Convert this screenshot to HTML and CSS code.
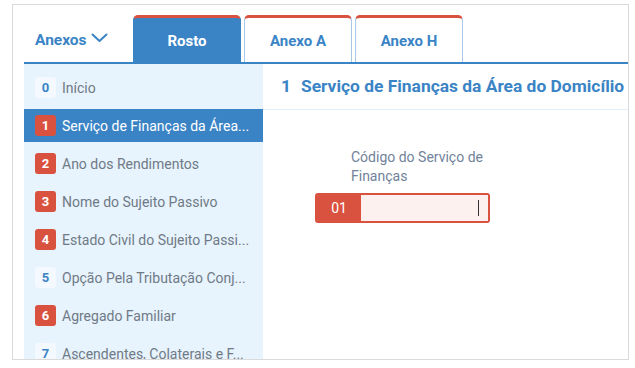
FILE: index.html
```html
<!DOCTYPE html>
<html lang="pt">
<head>
<meta charset="utf-8">
<title>Rosto</title>
<link rel="stylesheet" href="styles.css">
</head>
<body>
<div class="frame">
  <div class="tabbar">
    <div class="anexos">Anexos
      <svg class="chev" width="17" height="10" viewBox="0 0 17 10"><path d="M1.5 1.5 L8.5 8 L15.5 1.5" fill="none" stroke="#3a84c6" stroke-width="2" stroke-linecap="round" stroke-linejoin="round"/></svg>
    </div>
    <div class="tab active">Rosto</div>
    <div class="tab">Anexo A</div>
    <div class="tab">Anexo H</div>
  </div>
  <div class="main">
    <ul class="sidebar">
      <li class="item"><span class="badge plain">0</span><span class="label">Início</span></li>
      <li class="item selected"><span class="badge red">1</span><span class="label">Serviço de Finanças da Área...</span></li>
      <li class="item"><span class="badge red">2</span><span class="label">Ano dos Rendimentos</span></li>
      <li class="item"><span class="badge red">3</span><span class="label">Nome do Sujeito Passivo</span></li>
      <li class="item"><span class="badge red">4</span><span class="label">Estado Civil do Sujeito Passi...</span></li>
      <li class="item"><span class="badge plain">5</span><span class="label">Opção Pela Tributação Conj...</span></li>
      <li class="item"><span class="badge red">6</span><span class="label">Agregado Familiar</span></li>
      <li class="item"><span class="badge plain">7</span><span class="label">Ascendentes, Colaterais e F...</span></li>
    </ul>
    <div class="content">
      <div class="section-head"><span class="num">1</span><span>Serviço de Finanças da Área do Domicílio</span></div>
      <div class="field">
        <div class="field-label">Código do Serviço de<br>Finanças</div>
        <div class="input">
          <span class="prefix">01</span>
          <span class="box"><span class="caret"></span></span>
        </div>
      </div>
    </div>
  </div>
</div>
</body>
</html>
```
FILE: styles.css
```css
* { box-sizing: border-box; }
body {
  margin: 0;
  background: #fff;
  font-family: Roboto, "Liberation Sans", Arial, sans-serif;
}
.frame {
  margin: 4px 0 0 12px;
  width: 617px;
  height: 356px;
  border: 1px solid #dadada;
  overflow: hidden;
  padding-left: 11px;
}
.tabbar {
  display: flex;
  align-items: flex-end;
  height: 59px;
  padding-top: 10px;
  border-bottom: 2px solid #3a84c6;
}
.anexos {
  width: 109px;
  align-self: center;
  padding-left: 11px;
  padding-top: 2px;
  color: #3a84c6;
  font-weight: 700;
  font-size: 15.5px;
  display: flex;
  align-items: center;
  gap: 4px;
}
.chev { margin-top: -3px; }
.tab {
  width: 108px;
  height: 47px;
  margin-right: 3px;
  border: 1px solid #a9c9e8;
  border-bottom: none;
  border-top: 3px solid #d9523f;
  border-radius: 5px 5px 0 0;
  display: flex;
  align-items: center;
  justify-content: center;
  padding-top: 2px;
  color: #3a84c6;
  font-weight: 700;
  font-size: 15px;
  background: #fff;
}
.tab.active {
  background: #3a84c6;
  border-color: #3a84c6;
  border-top-color: #d9523f;
  color: #fff;
}
.main {
  display: flex;
  height: 300px;
}
.sidebar {
  list-style: none;
  margin: 0;
  padding: 7px 0 0;
  width: 239px;
  background: #e7f3fd;
}
.item {
  height: 33px;
  margin-bottom: 5px;
  display: flex;
  align-items: center;
  padding-left: 11px;
  gap: 6px;
  color: #6f7a86;
  font-size: 14px;
  white-space: nowrap;
}
.item.selected {
  background: #3a84c6;
  color: #fff;
}
.badge {
  width: 21px;
  height: 21px;
  border-radius: 3px;
  display: flex;
  align-items: center;
  justify-content: center;
  font-size: 13px;
  font-weight: 700;
  flex: none;
}
.badge.red { background: #d9523f; color: #fff; }
.badge.plain { background: #f3f9fe; color: #3a84c6; }
.content {
  flex: 1;
  background: #fff;
}
.section-head {
  height: 46px;
  border-bottom: 1px solid #e2eef8;
  display: flex;
  align-items: center;
  padding-left: 18px;
  padding-bottom: 2px;
  gap: 10px;
  color: #3a84c6;
  font-weight: 700;
  font-size: 17.4px;
  white-space: nowrap;
}
.field {
  padding: 38px 0 0 52px;
}
.field-label {
  margin-left: 36px;
  color: #71829a;
  font-size: 14px;
  line-height: 19px;
  margin-bottom: 7px;
}
.input {
  display: flex;
  width: 175px;
  height: 30px;
  border: 2px solid #d9523f;
  border-radius: 3px;
  overflow: hidden;
}
.prefix {
  width: 44px;
  background: #d9523f;
  color: #fff;
  font-size: 14px;
  display: flex;
  align-items: center;
  justify-content: center;
}
.box {
  flex: 1;
  background: #fcf1ef;
  display: flex;
  align-items: center;
  justify-content: flex-end;
  padding-right: 9px;
}
.caret {
  width: 1.5px;
  height: 16px;
  background: #333;
}
```
